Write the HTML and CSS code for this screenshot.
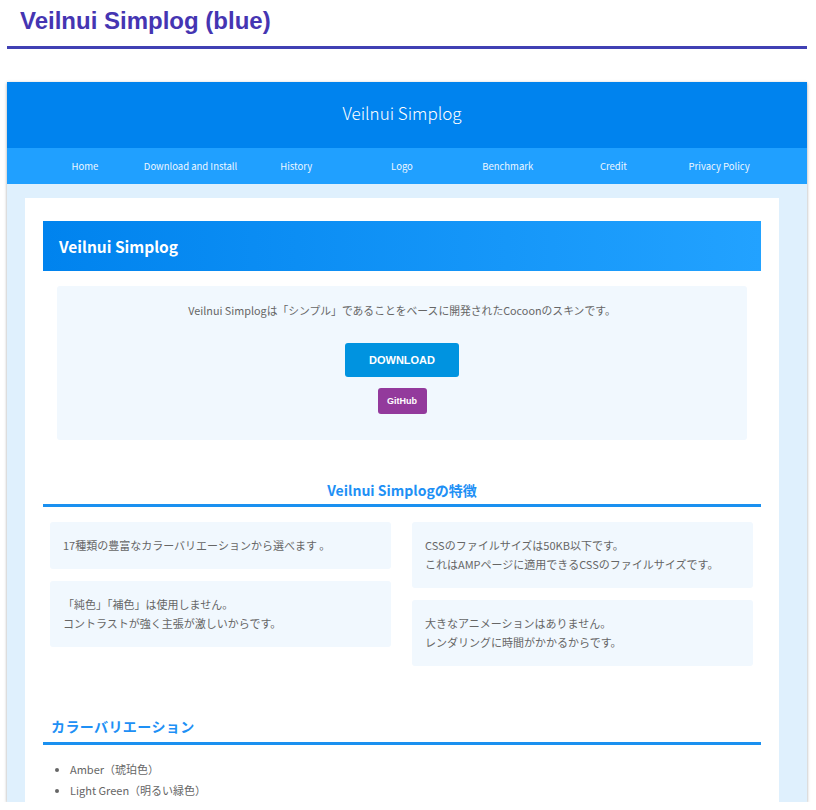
FILE: index.html
```html
<!DOCTYPE html>
<html lang="ja">
<head>
    <meta charset="UTF-8">
    <meta name="viewport" content="width=device-width, initial-scale=1.0">
    <title>Veilnui Simplog (blue)</title>
    <link rel="stylesheet" href="styles.css">
</head>
<body>
    <h1 class="page-title">Veilnui Simplog (blue)</h1>

    <div class="shot">
        <div class="site">
            <header class="site-header">
                <div class="site-name">Veilnui Simplog</div>
            </header>
            <nav class="site-nav">
                <ul>
                    <li>Home</li>
                    <li>Download and Install</li>
                    <li>History</li>
                    <li>Logo</li>
                    <li>Benchmark</li>
                    <li>Credit</li>
                    <li>Privacy Policy</li>
                </ul>
            </nav>

            <main class="content">
                <div class="entry">
                    <h1 class="entry-title">Veilnui Simplog</h1>

                    <div class="intro">
                        <p>Veilnui Simplogは「シンプル」であることをベースに開発されたCocoonのスキンです。</p>
                        <a class="btn btn-download">DOWNLOAD</a>
                        <a class="btn btn-github">GitHub</a>
                    </div>

                    <h2 class="section-title center">Veilnui Simplogの特徴</h2>

                    <div class="features">
                        <div class="col">
                            <div class="card">17種類の豊富なカラーバリエーションから選べます 。</div>
                            <div class="card">「純色」「補色」は使用しません。<br>コントラストが強く主張が激しいからです。</div>
                        </div>
                        <div class="col">
                            <div class="card">CSSのファイルサイズは50KB以下です。<br>これはAMPページに適用できるCSSのファイルサイズです。</div>
                            <div class="card">大きなアニメーションはありません。<br>レンダリングに時間がかかるからです。</div>
                        </div>
                    </div>

                    <h2 class="section-title spaced">カラーバリエーション</h2>

                    <ul class="colors">
                        <li>Amber（琥珀色）</li>
                        <li>Light Green（明るい緑色）</li>
                    </ul>
                </div>
            </main>
        </div>
    </div>
</body>
</html>
```

FILE: styles.css
```css
body {
    margin: 0;
    padding: 0 9px 0 7px;
    background-color: #fff;
    font-family: "Liberation Sans", Arial, sans-serif;
}

.page-title {
    margin: 0;
    padding: 7px 0 11px 13px;
    font-size: 24px;
    font-weight: bold;
    color: #4535b2;
    border-bottom: 3px solid #4040b4;
}

.shot {
    margin-top: 33px;
    height: 720px;
    overflow: hidden;
    box-shadow: 0 1px 3px rgba(0, 0, 0, 0.35);
}

.site {
    font-family: "Noto Sans CJK JP", "Noto Sans", sans-serif;
    background-color: #dff0fd;
    height: 100%;
}

.site-header {
    height: 66px;
    background-color: #0083ee;
    display: flex;
    align-items: center;
    justify-content: center;
    padding-right: 10px;
}

.site-name {
    color: #fff;
    font-size: 17px;
    font-weight: 300;
    padding-bottom: 5px;
}

.site-nav {
    height: 36px;
    background-color: #20a0ff;
    padding-right: 10px;
}

.site-nav ul {
    list-style: none;
    margin: 0 auto;
    padding: 0;
    width: 740px;
    height: 100%;
    display: grid;
    grid-template-columns: repeat(7, 1fr);
    align-items: center;
}

.site-nav li {
    text-align: center;
    color: #fff;
    font-size: 9.5px;
    opacity: 0.92;
}

.content {
    padding: 14px 28px 0 18px;
}

.entry {
    background-color: #fff;
    padding: 23px 18px 20px 18px;
    min-height: 700px;
}

.entry-title {
    margin: 0;
    height: 50px;
    padding: 0 16px;
    display: flex;
    align-items: center;
    font-size: 15.5px;
    font-weight: bold;
    color: #fff;
    background: linear-gradient(to right, #0083ee, #22a2ff);
}

.intro {
    margin: 15px 14px 0 14px;
    padding: 14px 0 26px 0;
    background-color: #f1f8fe;
    border-radius: 3px;
    text-align: center;
}

.intro p {
    margin: 0 0 23px 0;
    font-size: 10.8px;
    color: #666;
    line-height: 20px;
}

.btn {
    display: block;
    margin: 0 auto;
    color: #fff;
    font-family: "Liberation Sans", Arial, sans-serif;
    font-weight: bold;
    border-radius: 3px;
}

.btn-download {
    width: 114px;
    height: 34px;
    line-height: 34px;
    font-size: 11px;
    background-color: #0093e0;
}

.btn-github {
    width: 49px;
    height: 26px;
    line-height: 26px;
    font-size: 9px;
    margin-top: 11px;
    background-color: #933a9c;
}

.section-title {
    margin: 0;
    font-size: 14px;
    font-weight: bold;
    color: #1e90f5;
    border-bottom: 3px solid #1a90f0;
}

.section-title.center {
    margin-top: 40px;
    text-align: center;
    padding-bottom: 4px;
}

.section-title.spaced {
    margin-top: 50px;
    padding: 0 0 6px 8px;
    letter-spacing: 0.4px;
}

.features {
    display: grid;
    grid-template-columns: 341px 341px;
    column-gap: 21px;
    margin: 15px 0 0 7px;
}

.col {
    display: flex;
    flex-direction: column;
    gap: 12px;
}

.card {
    background-color: #f1f8fe;
    border-radius: 3px;
    padding: 14px 13px;
    font-size: 11px;
    line-height: 19px;
    color: #666;
}

.colors {
    margin: 14px 0 0 0;
    padding-left: 27px;
    font-size: 11px;
    line-height: 21px;
    color: #666;
}
```
